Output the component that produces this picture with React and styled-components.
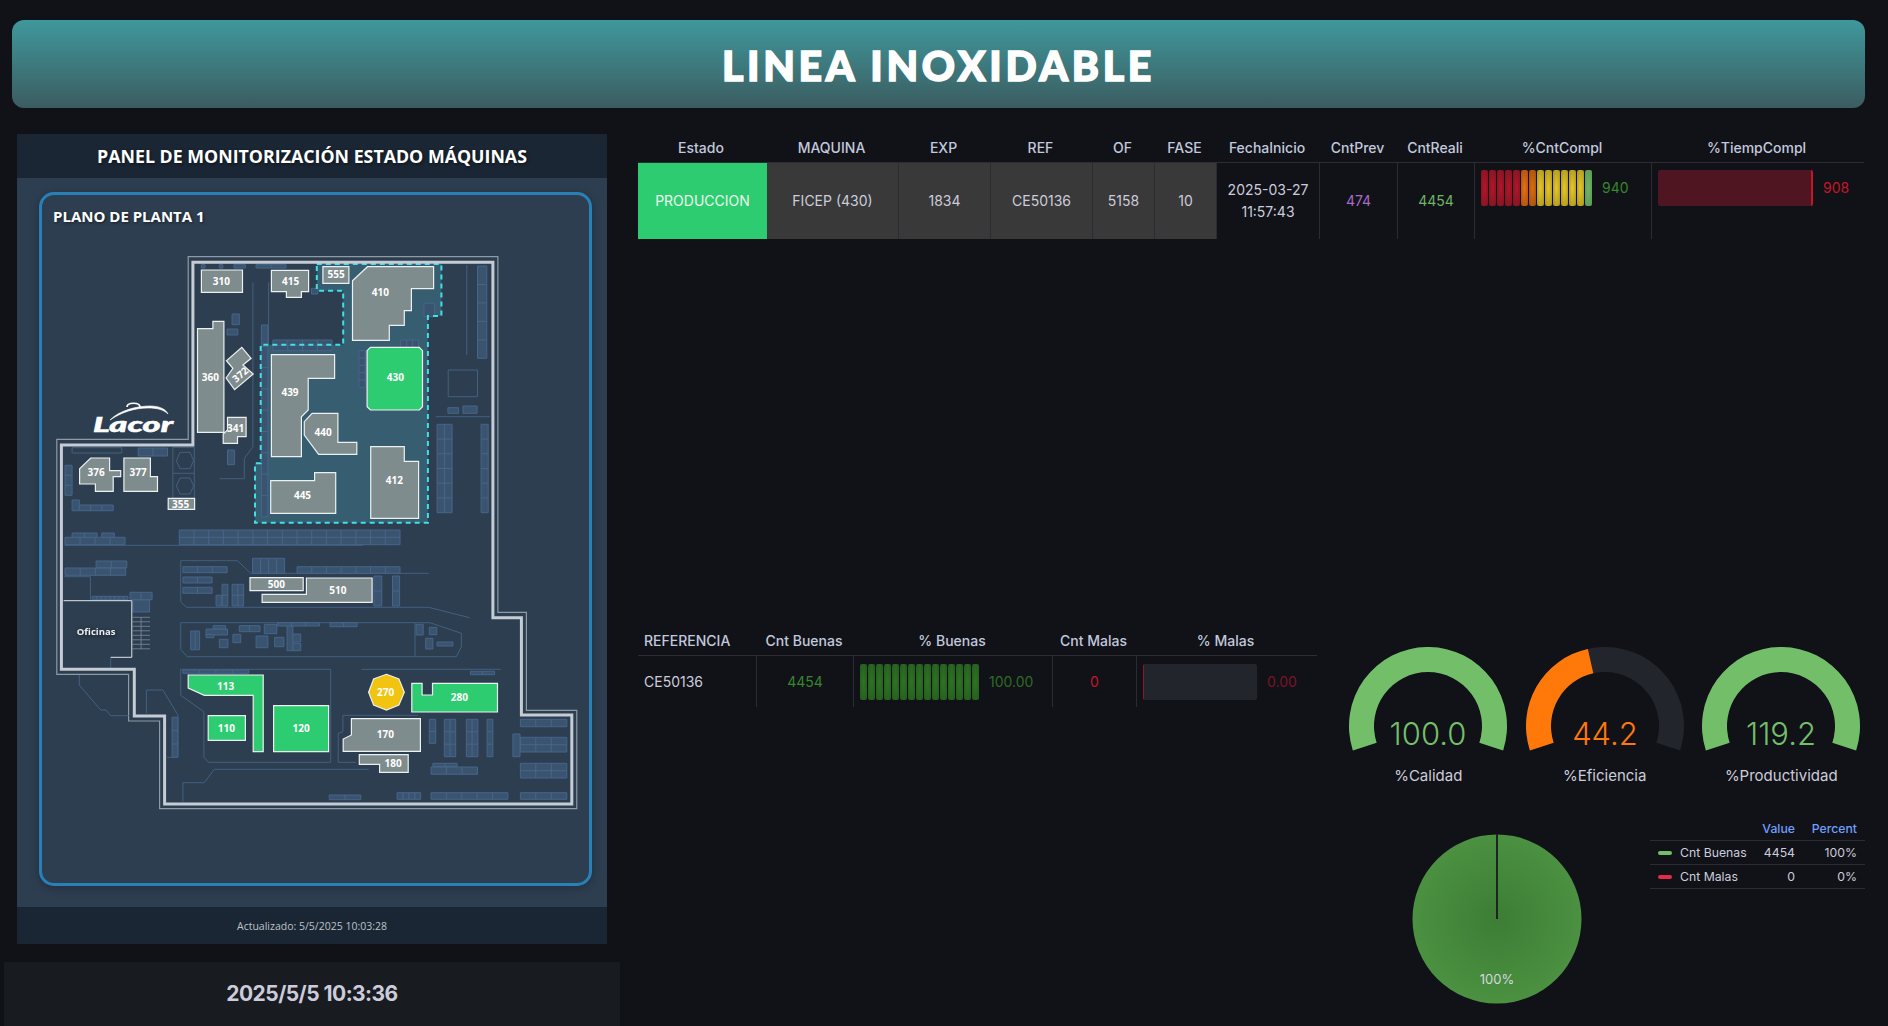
import React from 'react';
import styled, { createGlobalStyle } from 'styled-components';

const GlobalStyle = createGlobalStyle`
  html, body {
    margin: 0;
    padding: 0;
    background: #111217;
    color: #ccccdc;
    font-family: Inter, "Liberation Sans", sans-serif;
  }
`;

const Page = styled.div`
  width: 1888px;
  height: 1026px;
  overflow: hidden;
  padding-top: 20px;
  box-sizing: border-box;
`;

const Banner = styled.header`
  height: 88px;
  margin: 0 23px 26px 12px;
  padding-top: 3px;
  box-sizing: border-box;
  border-radius: 12px;
  background: linear-gradient(180deg, #3f989c 0%, #3b5c60 100%);
  display: flex;
  align-items: center;
  justify-content: center;
`;

const BannerTitle = styled.h1`
  margin: 0;
  font-family: Lato, sans-serif;
  font-weight: 900;
  font-size: 41px;
  letter-spacing: 3.7px;
  color: #fff;
  -webkit-text-stroke: 1.5px #fff;
`;

const Main = styled.main`
  display: grid;
  grid-template-columns: 616px 1fr;
  column-gap: 18px;
  margin-left: 4px;
`;

const LeftColumn = styled.section`
  display: flex;
  flex-direction: column;
  gap: 18px;
`;

const MapPanel = styled.div`
  margin: 0 13px;
  height: 810px;
  background: #2d3e50;
  display: flex;
  flex-direction: column;
  font-family: "Open Sans", sans-serif;
`;

const MapHeader = styled.div`
  height: 44px;
  flex: none;
  background: #1a2634;
  color: #fff;
  font-weight: 700;
  font-size: 17.8px;
  display: flex;
  align-items: center;
  justify-content: center;
  text-shadow: 1px 1px 3px rgba(0, 0, 0, 0.5);
`;

const MapFrame = styled.div`
  flex: 1;
  margin: 14px 15px 21px 22px;
  border: 3px solid #2980b9;
  border-radius: 15px;
  box-shadow: 0 2px 10px rgba(0, 0, 0, 0.25);
  position: relative;
  overflow: hidden;
`;

const MapTitle = styled.div`
  position: absolute;
  left: 11px;
  top: 11px;
  font-weight: 700;
  font-size: 15px;
  line-height: 20px;
  color: #fff;
  text-shadow: 1px 1px 3px rgba(0, 0, 0, 0.5);
`;

const MapSvg = styled.svg`
  display: block;
  width: 100%;
  height: 100%;
`;

const MapFooter = styled.div`
  height: 37px;
  flex: none;
  background: #1a2634;
  color: #bdc3c7;
  font-size: 10.5px;
  display: flex;
  align-items: center;
  justify-content: center;
`;

const Clock = styled.div`
  height: 68px;
  background: #181b1f;
  display: flex;
  align-items: center;
  justify-content: center;
  font-size: 21px;
  font-weight: 700;
  letter-spacing: -0.55px;
  color: #ccccdc;
  padding-bottom: 5px;
  box-sizing: border-box;
`;

const RightColumn = styled.section`
  margin-top: 1px;
  width: 1246px;
`;

const TopTable = styled.div`
  width: 1226px;
  display: grid;
  grid-template-columns: 129px 132px 92px 102px 62px 62px 103px 78px 77px 177px 212px;
  grid-template-rows: 28px 76px;
`;

const HeadCell = styled.div`
  display: flex;
  align-items: center;
  justify-content: ${(p) => (p.$left ? 'flex-start' : 'center')};
  padding: 0 ${(p) => (p.$left ? '0' : '3px')} 2px ${(p) => (p.$left ? '6px' : '0')};
  font-size: 14px;
  font-weight: 500;
  color: #c1c9de;
  border-bottom: 1px solid #2b2d33;
`;

const Cell = styled.div`
  display: flex;
  align-items: center;
  justify-content: center;
  text-align: center;
  font-size: 14px;
  line-height: 22px;
  color: ${(p) => p.$color || '#ccccdc'};
  background: ${(p) => p.$bg || 'transparent'};
  border-right: 1px solid #2a2c31;
`;

const StatusCell = styled(Cell)`
  color: #e8f6ec;
  background: #2ecc71;
  border-right: none;
`;

const BarCell = styled.div`
  display: flex;
  align-items: flex-start;
  padding: 7px 0 0 6px;
  gap: 10px;
  height: ${(p) => (p.$short ? '49px' : '76px')};
  box-sizing: border-box;
  border-right: ${(p) => (p.$noBorder ? 'none' : '1px solid #2a2c31')};
`;

const LedBar = styled.div`
  width: ${(p) => p.$width}px;
  height: 36px;
  flex: none;
  display: flex;
  gap: 1.5px;
`;

const Led = styled.div`
  flex: 1;
  border-radius: 2px;
  background: radial-gradient(ellipse at center, ${(p) => p.$color} 0%, ${(p) => p.$dim} 100%);
`;

const FillBar = styled.div`
  width: ${(p) => p.$width}px;
  height: 36px;
  flex: none;
  box-sizing: border-box;
  border-radius: 2px;
  background: ${(p) => p.$bg};
  ${(p) => p.$edge};
`;

const BarValue = styled.span`
  font-size: 14px;
  line-height: 36px;
  color: ${(p) => p.$color};
`;

const BottomRow = styled.div`
  display: flex;
  margin-top: 389px;
`;

const RefTable = styled.div`
  width: 679px;
  flex: none;
  display: grid;
  grid-template-columns: 119px 97px 199px 84px 180px;
  grid-template-rows: 28px 51px;
`;

const RefCell = styled(Cell)`
  justify-content: ${(p) => (p.$left ? 'flex-start' : 'center')};
  padding-left: ${(p) => (p.$left ? '6px' : '0')};
`;

const RefBar = styled(BarCell)`
  height: 51px;
  padding: 8px 0 0 6px;
`;

const KpiColumn = styled.div`
  margin-left: 23px;
  width: 530px;
  padding-top: 19px;
`;

const GaugeRow = styled.div`
  display: grid;
  grid-template-columns: repeat(3, 176.5px);
`;

const GaugeBox = styled.div`
  display: flex;
  flex-direction: column;
  align-items: center;
`;

const GaugeSvg = styled.svg`
  display: block;
`;

const GaugeLabel = styled.div`
  margin-top: 15px;
  font-size: 15px;
  line-height: 18px;
  color: #ccccdc;
`;

const ChartRow = styled.div`
  display: flex;
  margin-top: 32px;
`;

const PieBox = styled.div`
  width: 310px;
  flex: none;
  padding: 17px 0 0 72px;
  box-sizing: border-box;
`;

const Legend = styled.div`
  width: 215px;
  display: grid;
  grid-template-columns: 100px 45px 70px;
  grid-auto-rows: 24px;
  font-size: 12.25px;
`;

const LegendCell = styled.div`
  display: flex;
  align-items: center;
  justify-content: ${(p) => (p.$name ? 'flex-start' : 'flex-end')};
  gap: 8px;
  padding: ${(p) => (p.$name ? '0 0 0 8px' : p.$pct ? '0 8px 0 0' : '0')};
  color: ${(p) => (p.$head ? '#6e9fff' : '#ccccdc')};
  font-weight: ${(p) => (p.$head ? 500 : 400)};
  border-bottom: 1px solid #2a2c31;
`;

const LegendMark = styled.span`
  width: 14px;
  height: 4px;
  border-radius: 2px;
  background: ${(p) => p.$color};
`;

// all map coordinates come from the reference crop (1px = 1/2.8 wide, 1/3 high)
const toX = (x) => (40 + x / 2.8 - 42).toFixed(1);
const toY = (y) => (240 + y / 3 - 195).toFixed(1);
const LOWER = 870;
const pts = (list, dy = 0) => list.map(([x, y]) => `${toX(x)},${toY(y + dy)}`).join(' ');
const poly = (flat) => {
  const out = [];
  for (let i = 0; i < flat.length; i += 2) out.push([flat[i], flat[i + 1]]);
  return out;
};

const outerWall = poly([47, 598, 415, 598, 415, 50, 1282, 50, 1282, 1117, 1362, 1117, 1362, 1411, 1503, 1411, 1503, 1706, 335, 1706, 335, 1443, 248, 1443, 248, 1303, 47, 1303]);
const innerWall = poly([60, 615, 428, 615, 428, 67, 1268, 67, 1268, 1133, 1348, 1133, 1348, 1425, 1489, 1425, 1489, 1692, 349, 1692, 349, 1428, 264, 1428, 264, 1288, 60, 1288]);
const zone = poly([775, 72, 1124, 72, 1124, 228, 1086, 228, 1086, 848, 602, 848, 602, 670, 618, 670, 618, 314, 849, 314, 849, 152, 775, 152]);

// x, y, w, h, cols, rows
const racksUpper = [
  [1225, 78, 26, 277, 1, 5], [652, 300, 166, 32, 4, 2], [620, 255, 18, 575, 1, 9], [1010, 300, 50, 22, 3, 1],
  [893, 332, 18, 110, 1, 5], [1075, 190, 30, 40, 1, 1], [1112, 553, 42, 265, 2, 6], [1235, 553, 20, 265, 1, 6],
  [1142, 503, 30, 17, 1, 1], [1184, 498, 40, 22, 1, 1], [538, 222, 20, 32, 1, 1], [524, 267, 30, 18, 1, 1],
  [525, 630, 20, 44, 1, 1], [760, 145, 18, 17, 1, 1], [452, 74, 10, 10, 1, 1], [502, 74, 10, 10, 1, 1],
  [543, 74, 32, 10, 1, 1], [605, 74, 84, 10, 2, 1], [275, 624, 82, 24, 2, 1], [70, 676, 20, 90, 1, 3],
  [90, 780, 20, 32, 1, 1], [110, 795, 95, 17, 3, 1],
];
const racksLower = [
  [70, 22, 168, 22, 4, 1], [90, 9, 70, 13, 2, 1], [173, 9, 35, 13, 1, 1], [70, 114, 170, 22, 4, 1], [157, 93, 86, 20, 2, 1],
  [390, 0, 618, 44, 15, 2], [400, 110, 124, 18, 3, 1], [400, 141, 82, 18, 2, 1], [400, 172, 82, 18, 2, 1],
  [510, 163, 16, 65, 1, 2], [493, 196, 16, 32, 1, 1], [538, 163, 32, 65, 2, 2], [595, 85, 90, 45, 4, 1],
  [720, 110, 288, 20, 7, 1], [935, 138, 22, 90, 1, 2], [987, 138, 20, 90, 1, 2], [146, 199, 100, 10, 8, 1],
  [252, 187, 62, 22, 2, 1], [260, 210, 47, 36, 1, 1], [422, 303, 25, 56, 2, 1], [465, 297, 60, 18, 1, 1],
  [485, 287, 35, 10, 1, 1], [465, 313, 22, 10, 1, 1], [502, 328, 24, 25, 1, 1], [540, 313, 22, 25, 1, 1],
  [558, 287, 58, 18, 2, 1], [628, 283, 35, 28, 1, 1], [605, 318, 33, 35, 1, 1], [657, 322, 26, 28, 1, 1],
  [692, 285, 16, 77, 1, 1], [708, 312, 22, 24, 1, 1], [708, 340, 22, 22, 1, 1], [665, 278, 118, 10, 3, 1],
  [812, 278, 76, 12, 2, 1], [1053, 283, 20, 32, 1, 1], [1090, 292, 21, 22, 1, 1], [1080, 325, 20, 32, 1, 1],
  [1112, 336, 44, 12, 1, 1], [400, 420, 185, 10, 4, 1], [1205, 424, 68, 10, 2, 1], [370, 562, 16, 120, 1, 3],
  [1090, 568, 18, 72, 1, 2], [1132, 568, 32, 112, 2, 3], [1194, 568, 32, 112, 2, 3], [1252, 568, 16, 112, 1, 3],
  [1345, 568, 130, 22, 3, 1], [1345, 622, 130, 44, 3, 2], [1324, 612, 20, 68, 1, 1], [1345, 700, 130, 44, 3, 2],
  [1100, 700, 68, 10, 2, 1], [1095, 711, 130, 22, 3, 1], [1345, 788, 130, 20, 3, 1], [1095, 788, 215, 20, 5, 1],
  [1000, 788, 66, 20, 4, 1], [810, 795, 88, 14, 2, 1],
];
const linesUpper = [
  [596, 127, 596, 620, 572, 655, 572, 716, 502, 716], [640, 127, 640, 330], [1195, 75, 1195, 345], [1108, 530, 1260, 530],
  [834, 330, 834, 795], [90, 623, 229, 623, 229, 639, 90, 639, 90, 623], [1143, 390, 1225, 390, 1225, 470, 1143, 470, 1143, 390],
  [372, 622, 432, 622, 432, 775, 372, 775, 372, 622], [372, 700, 432, 700],
  [382, 662, 392, 637, 420, 637, 430, 662, 420, 686, 392, 686, 382, 662], [382, 738, 392, 714, 420, 714, 430, 738, 420, 762, 392, 762, 382, 738],
];
const linesLower = [
  [68, 46, 905, 46], [68, 140, 141, 140, 141, 212], [394, 92, 553, 92, 590, 130, 1088, 130],
  [394, 92, 394, 215, 410, 232, 1088, 232, 1203, 263],
  [394, 278, 1092, 278, 1180, 310, 1180, 350, 1166, 380, 412, 380, 394, 358, 394, 278], [1050, 278, 1050, 380],
  [900, 418, 1290, 418], [394, 418, 814, 418, 814, 697, 472, 697, 459, 682, 459, 545, 394, 496, 394, 418],
  [110, 435, 110, 465, 170, 540, 185, 540, 198, 557, 248, 557], [298, 550, 298, 480, 344, 480, 386, 555, 386, 682, 356, 682],
  [848, 605, 848, 556, 1058, 556], [848, 605, 835, 610, 835, 697, 885, 697], [400, 815, 400, 758, 460, 758, 488, 718, 920, 718],
  [198, 382, 198, 415],
];

const GREY = '#7f8c8d';
const GREEN = '#2ecc71';
const YELLOW = '#f1c40f';

// fill, label, label x, label y, outline (upper crop coords, or lower with dy)
const machines = [
  [GREY, '310', 508, 124, [452, 90, 567, 90, 567, 157, 452, 157]],
  [GREY, '415', 702, 124, [648, 91, 752, 91, 752, 155, 732, 155, 732, 172, 690, 172, 690, 155, 648, 155]],
  [GREY, '555', 829, 103, [792, 80, 865, 80, 865, 130, 792, 130]],
  [GREY, '410', 953, 157, [875, 122, 917, 80, 1102, 80, 1102, 146, 1040, 146, 1040, 212, 1020, 212, 1020, 256, 978, 256, 978, 301, 875, 301]],
  [GREY, '360', 477, 412, [441, 266, 484, 266, 484, 244, 515, 244, 515, 577, 441, 577]],
  [GREY, '341', 548, 565, [525, 532, 577, 532, 577, 590, 553, 590, 553, 610, 513, 610, 513, 582, 525, 570]],
  [GREY, '439', 700, 457, [648, 344, 825, 344, 825, 415, 751, 415, 751, 510, 732, 530, 732, 650, 648, 650]],
  [GREY, '440', 793, 577, [762, 520, 834, 520, 834, 607, 887, 607, 887, 643, 780, 643, 740, 585, 740, 545]],
  [GREEN, '430', 995, 412, [925, 322, 1062, 322, 1071, 332, 1071, 500, 1062, 510, 925, 510, 916, 500, 916, 332]],
  [GREY, '445', 735, 766, [646, 722, 769, 722, 769, 698, 828, 698, 828, 820, 646, 820]],
  [GREY, '412', 992, 721, [926, 620, 1020, 620, 1020, 664, 1060, 664, 1060, 835, 926, 835]],
  [GREY, '376', 157, 697, [142, 654, 195, 654, 195, 692, 226, 692, 226, 710, 205, 710, 205, 754, 155, 754, 155, 732, 111, 732, 111, 686]],
  [GREY, '377', 275, 697, [235, 654, 309, 654, 309, 710, 329, 710, 329, 754, 235, 754]],
  [GREY, '355', 394, 791, [359, 775, 433, 775, 433, 808, 359, 808]],
];
const machinesLower = [
  [GREY, '500', 662, 163, [588, 143, 737, 143, 737, 182, 588, 182]],
  [GREY, '510', 834, 181, [746, 144, 930, 144, 930, 217, 622, 217, 622, 193, 746, 193]],
  [GREEN, '113', 520, 469, [415, 435, 625, 435, 625, 665, 597, 665, 597, 496, 460, 496, 415, 474]],
  [GREEN, '110', 522, 595, [471, 557, 575, 557, 575, 631, 471, 631]],
  [GREEN, '120', 731, 595, [654, 527, 808, 527, 808, 665, 654, 665]],
  [YELLOW, '270', 968, 487, [970, 433, 1005, 447, 1020, 487, 1005, 525, 970, 540, 934, 525, 920, 487, 934, 447]],
  [GREEN, '280', 1174, 502, [1041, 460, 1070, 460, 1070, 495, 1099, 495, 1099, 460, 1281, 460, 1281, 546, 1041, 546]],
  [GREY, '170', 967, 613, [872, 566, 1065, 566, 1065, 664, 849, 664, 849, 627, 872, 615]],
  [GREY, '180', 989, 700, [894, 674, 1031, 674, 1031, 727, 951, 727, 951, 703, 894, 703]],
];

const MapLabel = styled.text`
  font-family: "Open Sans", sans-serif;
  font-size: ${(p) => p.$size || 10}px;
  font-weight: 700;
  fill: ${(p) => p.$fill || '#fff'};
  text-anchor: middle;
  dominant-baseline: central;
`;

const Rack = ({ r, dy }) => {
  const [x, y, w, h, cols, rows] = r;
  const divs = [];
  for (let c = 1; c < cols; c++) {
    divs.push([[x + (w * c) / cols, y], [x + (w * c) / cols, y + h]]);
  }
  for (let k = 1; k < rows; k++) {
    divs.push([[x, y + (h * k) / rows], [x + w, y + (h * k) / rows]]);
  }
  return (
    <g>
      <polygon points={pts([[x, y], [x + w, y], [x + w, y + h], [x, y + h]], dy)} fill="#3a5470" stroke="#46658a" strokeWidth="1" />
      {divs.map((d, i) => (
        <polyline key={i} points={pts(d, dy)} fill="none" stroke="#4a6a8c" strokeWidth="0.8" />
      ))}
    </g>
  );
};

const Machine = ({ m, dy }) => {
  const [fill, label, lx, ly, shape] = m;
  return (
    <g>
      <polygon points={pts(poly(shape), dy)} fill={fill} stroke="#ecf0f1" strokeWidth="1.2" />
      <MapLabel x={toX(lx)} y={toY(ly + dy)}>{label}</MapLabel>
    </g>
  );
};

const FactoryMap = () => (
  <MapSvg viewBox="0 0 547 688">
    <polygon points={pts(outerWall)} fill="none" stroke="#8e9aa6" strokeWidth="1.2" />
    {linesUpper.map((l, i) => (
      <polyline key={i} points={pts(poly(l))} fill="none" stroke="#43617f" strokeWidth="1" />
    ))}
    {linesLower.map((l, i) => (
      <polyline key={i} points={pts(poly(l), LOWER)} fill="none" stroke="#43617f" strokeWidth="1" />
    ))}
    <polygon points={pts(zone)} fill="#365d70" stroke="none" />
    {racksUpper.map((r, i) => <Rack key={i} r={r} dy={0} />)}
    {racksLower.map((r, i) => <Rack key={i} r={r} dy={LOWER} />)}
    <polygon points={pts(zone)} fill="none" stroke="#3fe0e6" strokeWidth="2" strokeDasharray="5 4" />
    <polygon points={pts(innerWall)} fill="none" stroke="#c5ccd3" strokeWidth="3" />

    <polyline points={pts(poly([66, 212, 257, 212, 257, 382, 198, 382]), LOWER)} fill="none" stroke="#dfe4e8" strokeWidth="1" />
    {[0, 1, 2, 3, 4, 5, 6, 7].map((k) => (
      <polyline key={k} points={pts([[258, 262 + k * 13.5], [308, 262 + k * 13.5]], LOWER)} stroke="#7d8c9c" strokeWidth="0.8" fill="none" />
    ))}
    <polyline points={pts([[283, 262], [283, 357]], LOWER)} stroke="#7d8c9c" strokeWidth="0.8" fill="none" />
    <MapLabel x={toX(157)} y={toY(305 + LOWER)} $size={9.5} $fill="#ecf0f1" style={{ filter: 'drop-shadow(1px 1px 2px rgba(0,0,0,.6))' }}>Oficinas</MapLabel>

    {machines.map((m) => <Machine key={m[1]} m={m} dy={0} />)}
    {machinesLower.map((m) => <Machine key={m[1]} m={m} dy={LOWER} />)}

    <polygon points={pts(poly([565, 322, 591, 355, 568, 375, 597, 402, 545, 449, 521, 414, 540, 385, 522, 362]))} fill={GREY} stroke="#ecf0f1" strokeWidth="1.2" />
    <MapLabel x={toX(560)} y={toY(403)} transform={`rotate(-40 ${toX(560)} ${toY(403)})`}>372</MapLabel>

    {/* Lacor logo: lid drawn, wordmark stays text */}
    <path d="M68 225 C78 215 95 211 108 211 C117 211 124 214 126 219 C122 215 116 213 106 213 C93 213 80 217 68 225 Z" fill="#fff" stroke="#fff" strokeWidth="0.6" />
    <path d="M85 212 C85 207 98 207 98 212" fill="none" stroke="#fff" strokeWidth="1.6" />
    <text x="51" y="237" fill="#fff" stroke="#fff" strokeWidth="0.5" fontFamily="Lato, sans-serif" fontWeight="900" fontStyle="italic" fontSize="20" textLength="80" lengthAdjust="spacingAndGlyphs">Lacor</text>
  </MapSvg>
);

// start/end measured as math angles: 198 deg on the left to -18 on the right
const arc = (cx, cy, from, to) => {
  const R = 79;
  const r = 54;
  const p = (rad, a) => {
    const t = (a * Math.PI) / 180;
    return `${(cx + rad * Math.cos(t)).toFixed(2)} ${(cy - rad * Math.sin(t)).toFixed(2)}`;
  };
  const large = from - to > 180 ? 1 : 0;
  return `M${p(R, from)} A${R} ${R} 0 ${large} 1 ${p(R, to)} L${p(r, to)} A${r} ${r} 0 ${large} 0 ${p(r, from)} Z`;
};

const Gauge = ({ value, color, label, pct }) => {
  const stop = 198 - 216 * pct;
  return (
    <GaugeBox>
      <GaugeSvg width="176" height="105" viewBox="0 0 176 105">
        <path d={arc(88, 79, 198, -18)} fill="#22252b" />
        <path d={arc(88, 79, 198, stop)} fill={color} />
        <text x="88" y="98" textAnchor="middle" fill={color} fontFamily="Inter, sans-serif" fontWeight="300" fontSize="31">{value}</text>
      </GaugeSvg>
      <GaugeLabel>{label}</GaugeLabel>
    </GaugeBox>
  );
};

const ledColors = [
  ['#b5152b', '#7e1422'], ['#b5152b', '#7e1422'], ['#b5152b', '#7e1422'], ['#b5152b', '#7e1422'], ['#b5152b', '#7e1422'],
  ['#e8700f', '#a84f10'], ['#d96c0c', '#a04e10'],
  ['#e6c829', '#a8911c'], ['#e6c829', '#a8911c'], ['#e6c829', '#a8911c'], ['#e6c829', '#a8911c'], ['#e6c829', '#a8911c'], ['#e6c829', '#a8911c'],
  ['#6fb565', '#5a9a52'],
];
const greenLeds = Array.from({ length: 15 }, () => ['#2f7424', '#245a1d']);

const tableHead = ['Estado', 'MAQUINA', 'EXP', 'REF', 'OF', 'FASE', 'FechaInicio', 'CntPrev', 'CntReali', '%CntCompl', '%TiempCompl'];
const refHead = ['REFERENCIA', 'Cnt Buenas', '% Buenas', 'Cnt Malas', '% Malas'];

export default function App() {
  return (
    <Page>
      <GlobalStyle />
      <Banner>
        <BannerTitle>LINEA INOXIDABLE</BannerTitle>
      </Banner>
      <Main>
        <LeftColumn>
          <MapPanel>
            <MapHeader>PANEL DE MONITORIZACIÓN ESTADO MÁQUINAS</MapHeader>
            <MapFrame>
              <MapTitle>PLANO DE PLANTA 1</MapTitle>
              <FactoryMap />
            </MapFrame>
            <MapFooter>Actualizado: 5/5/2025 10:03:28</MapFooter>
          </MapPanel>
          <Clock>2025/5/5 10:3:36</Clock>
        </LeftColumn>

        <RightColumn>
          <TopTable>
            {tableHead.map((h) => <HeadCell key={h}>{h}</HeadCell>)}
            <StatusCell>PRODUCCION</StatusCell>
            <Cell $bg="#3a3939">FICEP (430)</Cell>
            <Cell $bg="#3a3939">1834</Cell>
            <Cell $bg="#3a3939">CE50136</Cell>
            <Cell $bg="#3a3939">5158</Cell>
            <Cell $bg="#3a3939">10</Cell>
            <Cell>2025-03-27<br />11:57:43</Cell>
            <Cell $color="#a86bc4">474</Cell>
            <Cell $color="#6fb565">4454</Cell>
            <BarCell>
              <LedBar $width={111}>
                {ledColors.map(([c, d], i) => <Led key={i} $color={c} $dim={d} />)}
              </LedBar>
              <BarValue $color="#37872d">940</BarValue>
            </BarCell>
            <BarCell $noBorder>
              <FillBar $width={155} $bg="#4f1520" $edge="border-right: 2px solid #c4162a" />
              <BarValue $color="#c4162a">908</BarValue>
            </BarCell>
          </TopTable>

          <BottomRow>
            <RefTable>
              {refHead.map((h, i) => <HeadCell key={h} $left={i === 0}>{h}</HeadCell>)}
              <RefCell $left>CE50136</RefCell>
              <RefCell $color="#37872d">4454</RefCell>
              <RefBar>
                <LedBar $width={119}>
                  {greenLeds.map(([c, d], i) => <Led key={i} $color={c} $dim={d} />)}
                </LedBar>
                <BarValue $color="#2d6b25">100.00</BarValue>
              </RefBar>
              <RefCell $color="#c4162a">0</RefCell>
              <RefBar $noBorder>
                <FillBar $width={114} $bg="#22252b" $edge="border-left: 1px solid #8a1a2a" />
                <BarValue $color="#7a1424">0.00</BarValue>
              </RefBar>
            </RefTable>

            <KpiColumn>
              <GaugeRow>
                <Gauge value="100.0" color="#73bf69" label="%Calidad" pct={1} />
                <Gauge value="44.2" color="#ff780a" label="%Eficiencia" pct={0.442} />
                <Gauge value="119.2" color="#73bf69" label="%Productividad" pct={1} />
              </GaugeRow>
              <ChartRow>
                <PieBox>
                  <svg width="170" height="170" viewBox="0 0 170 170">
                    <defs>
                      <radialGradient id="pieFill">
                        <stop offset="0%" stopColor="#3d7d35" />
                        <stop offset="100%" stopColor="#4b9141" />
                      </radialGradient>
                    </defs>
                    <circle cx="85" cy="85" r="84.5" fill="url(#pieFill)" />
                    <line x1="85" y1="0" x2="85" y2="85" stroke="#1c2422" strokeWidth="2" />
                    <text x="85" y="150" textAnchor="middle" fill="#d4d8de" fontFamily="Inter, sans-serif" fontSize="13">100%</text>
                  </svg>
                </PieBox>
                <Legend>
                  <LegendCell $name />
                  <LegendCell $head>Value</LegendCell>
                  <LegendCell $head $pct>Percent</LegendCell>
                  <LegendCell $name><LegendMark $color="#73bf69" />Cnt Buenas</LegendCell>
                  <LegendCell>4454</LegendCell>
                  <LegendCell $pct>100%</LegendCell>
                  <LegendCell $name><LegendMark $color="#e02f44" />Cnt Malas</LegendCell>
                  <LegendCell>0</LegendCell>
                  <LegendCell $pct>0%</LegendCell>
                </Legend>
              </ChartRow>
            </KpiColumn>
          </BottomRow>
        </RightColumn>
      </Main>
    </Page>
  );
}
